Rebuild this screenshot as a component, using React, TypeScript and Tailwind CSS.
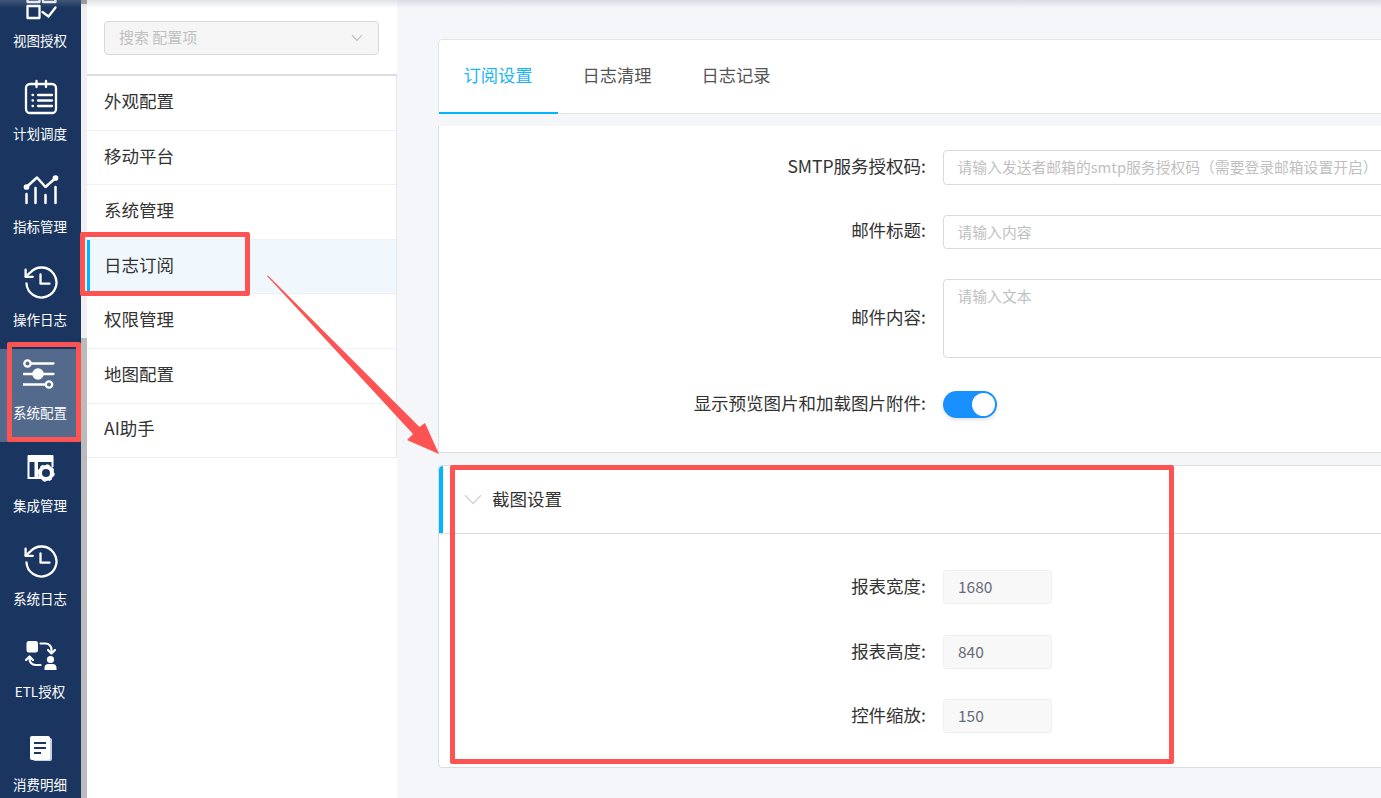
const cjk = "font-['Noto_Sans_CJK_SC','Noto_Sans',sans-serif]";

function ClockIcon() {
  return (
    <svg width="36" height="36" viewBox="0 0 36 36" fill="none" stroke="white" strokeWidth="2.3" strokeLinecap="round" strokeLinejoin="round">
      <path d="M3.5 18.5a15 15 0 1 0 3.6-10.8L2.8 11.6" />
      <path d="M2.6 4.6v7.2h7.2" />
      <path d="M17.5 9.5v9.2h9" />
    </svg>
  );
}

const icons: React.ReactNode[] = [
  <svg key="view" width="36" height="36" viewBox="0 0 36 36" fill="none" stroke="white" strokeWidth="2.3" strokeLinecap="round" strokeLinejoin="round">
    <rect x="4.5" y="20" width="12" height="12" />
    <rect x="4.5" y="4" width="12" height="12" />
    <rect x="20" y="4" width="12.5" height="12" />
    <path d="M19.5 26l6 4.5 7-9" />
  </svg>,
  <svg key="plan" width="36" height="36" viewBox="0 0 36 36" fill="none" stroke="white" strokeWidth="2.3" strokeLinecap="round">
    <rect x="3" y="5" width="30" height="29" rx="4" />
    <path d="M13.5 2v6M23 2v6" />
    <path d="M15 16h14M15 21.5h14M15 27h14" />
    <path d="M9.5 16h.5M9.5 21.5h.5M9.5 27h.5" />
  </svg>,
  <svg key="chart" width="36" height="36" viewBox="0 0 36 36" fill="none" stroke="white" strokeWidth="2.5" strokeLinecap="round" strokeLinejoin="round">
    <path d="M3.5 15L14 5.5 22.5 15l10-9" />
    <circle cx="3.5" cy="15" r="1.6" fill="white" />
    <circle cx="32.5" cy="6" r="1.6" fill="white" />
    <path d="M3.5 22v9M12.5 16v15M22.5 23v8M32.5 15v16" />
  </svg>,
  <ClockIcon key="log" />,
  <svg key="sliders" width="36" height="36" viewBox="0 0 36 36" fill="none" stroke="white" strokeWidth="2.3" strokeLinecap="round">
    <path d="M8 5.5h22.5M0 16h30.5M0 26.5h22.5" />
    <circle cx="4.5" cy="5.5" r="3.2" />
    <circle cx="15" cy="16" r="4.6" fill="white" />
    <circle cx="26" cy="26.5" r="3.2" />
  </svg>,
  <svg key="integration" width="36" height="36" viewBox="0 0 36 36" fill="none">
    <path d="M5.5 10h24v6M5.5 10v17h12" stroke="white" strokeWidth="2" />
    <rect x="4.5" y="4" width="26" height="6" rx="1" fill="white" />
    <rect x="11.5" y="10" width="3.5" height="17" fill="white" />
    <circle cx="23" cy="22" r="6" fill="#1a3660" stroke="white" strokeWidth="4" />
    <circle cx="23" cy="22" r="7.5" fill="none" stroke="white" strokeWidth="2.4" strokeDasharray="3 2.9" />
  </svg>,
  <ClockIcon key="syslog" />,
  <svg key="etl" width="36" height="36" viewBox="0 0 36 36" fill="none" stroke="white" strokeLinecap="round" strokeLinejoin="round">
    <rect x="3.5" y="4" width="11.5" height="11.5" rx="2.5" fill="white" stroke="none" />
    <path d="M17.5 6.5h5a6 6 0 0 1 6 6v3" strokeWidth="2.2" />
    <path d="M25 13l3.5 3.5L32 13" strokeWidth="2.2" />
    <path d="M6.5 20v2a6 6 0 0 0 6 6h5" strokeWidth="2.2" />
    <path d="M3 23l3.5-3.5L10 23" strokeWidth="2.2" />
    <circle cx="27.5" cy="22.5" r="3.6" fill="white" stroke="none" />
    <path d="M21.5 33v-2a4 4 0 0 1 4-4h4a4 4 0 0 1 4 4v2z" fill="white" stroke="none" />
  </svg>,
  <svg key="doc" width="36" height="36" viewBox="0 0 36 36" fill="none">
    <rect x="10" y="8" width="19" height="23" rx="2" fill="#c9d2df" />
    <rect x="7" y="6" width="20" height="24" rx="2" fill="white" />
    <path d="M11 13h12M11 18h12M11 23h7" stroke="#1a3660" strokeWidth="1.8" />
  </svg>,
];

const navLabels = ["视图授权", "计划调度", "指标管理", "操作日志", "系统配置", "集成管理", "系统日志", "ETL授权", "消费明细"];
const configItems = ["外观配置", "移动平台", "系统管理", "日志订阅", "权限管理", "地图配置", "AI助手"];
const tabs = ["订阅设置", "日志清理", "日志记录"];

function Label({ text, className = "pb-[4px]" }: { text: string; className?: string }) {
  return <div className={"w-[487px] shrink-0 text-right text-[17.5px] leading-none text-[#333333] " + className}>{text}</div>;
}

function NumberRow({ label, value, className }: { label: string; value: string; className: string }) {
  return (
    <div className={"flex items-center gap-[17px] " + className}>
      <Label text={label} className="pb-[2px]" />
      <div className="flex h-[34px] w-[109px] items-center rounded-[3px] border border-[#f0f0f0] bg-[#f8f8f8] pl-[14px] text-[15.5px] text-[#666b7a]">{value}</div>
    </div>
  );
}

export default function App() {
  return (
    <div className={"relative flex h-[798px] w-[1381px] overflow-hidden bg-[#f5f6fa] " + cjk}>
      <nav className="h-full w-[81px] shrink-0 overflow-hidden bg-[#1a3660]">
        <div className="-mt-[23px] flex flex-col">
          {navLabels.map((label, i) => (
            <div key={label} className={"flex h-[93px] shrink-0 flex-col items-center pt-[9px] " + (i === 4 ? "bg-[#546a8c]" : "")}>
              <div className="h-[36px] w-[36px]">{icons[i]}</div>
              <div className="mt-[8px] pr-[1px] text-[13.5px] leading-[20px] whitespace-nowrap text-white">{label}</div>
            </div>
          ))}
        </div>
      </nav>

      <div className="flex w-[6px] shrink-0 flex-col bg-[#bbbbbb]">
        <div className="h-[4px] bg-[#999999]" />
        <div className="h-[334px] bg-[#f0f0f0]" />
      </div>

      <aside className="h-full w-[310px] shrink-0 bg-white">
        <div className="h-[76px] border-b-2 border-[#dddddd] px-[17px] pt-[21px]">
          <div className="flex h-[34px] w-[275px] items-center justify-between rounded-[4px] border border-[#d9d9d9] bg-[#f5f5f5] pr-[15px] pl-[14px] text-[15px] text-[#bfbfbf]">
            <span className="pb-[2px]">搜索 配置项</span>
            <svg width="12" height="8" viewBox="0 0 12 8" fill="none" stroke="#bfbfbf" strokeWidth="1.1"><path d="M1 1.2l5 5.3 5-5.3" /></svg>
          </div>
        </div>
        <ul className="border-r border-[#e8e8e8]">
          {configItems.map((item) => (
            <li
              key={item}
              className={
                "flex h-[54.6px] items-center border-b border-[#f0f0f0] pb-[3.5px] text-[17.5px] text-[#333333] " +
                (item === "日志订阅" ? "border-l-[3px] border-l-[#00b4ff] bg-[#f0f7fd] pl-[14px]" : "pl-[17px]")
              }
            >
              {item}
            </li>
          ))}
        </ul>
      </aside>

      <main className="min-w-0 flex-1 pt-[39px] pl-[41px]">
        <div className="w-[1100px]">
          <div className="flex h-[75px] rounded-t-[4px] border border-[#e4e4e4] bg-white">
            {tabs.map((tab, i) => (
              <div
                key={tab}
                className={
                  "-mb-px flex w-[119px] items-center border-b-2 pb-[2px] pl-[24.5px] text-[17.3px] " +
                  (i === 0 ? "border-[#00b4ff] text-[#1ab5f5]" : "border-transparent text-[#555555]")
                }
              >
                {tab}
              </div>
            ))}
          </div>

          <div className="mt-[12px] h-[327px] border border-t-0 border-[#dddddd] bg-white pt-[24px]">
            <div className="flex items-center gap-[17px]">
              <Label text="SMTP服务授权码:" />
              <div className="flex h-[35px] flex-1 items-center rounded-[4px] border border-[#d9d9d9] pl-[13.5px] text-[14.8px] text-[#bfbfbf]">
                <span className="whitespace-nowrap">请输入发送者邮箱的smtp服务授权码（需要登录邮箱设置开启）</span>
              </div>
            </div>
            <div className="mt-[30px] flex items-center gap-[17px]">
              <Label text="邮件标题:" />
              <div className="flex h-[34px] flex-1 items-center rounded-[4px] border border-[#d9d9d9] pl-[13.5px] text-[14.8px] text-[#bfbfbf]">
                <span>请输入内容</span>
              </div>
            </div>
            <div className="mt-[30px] flex items-center gap-[17px]">
              <Label text="邮件内容:" />
              <div className="h-[79px] flex-1 rounded-[4px] border border-[#d9d9d9] pt-[5px] pl-[13.5px] text-[14.8px] text-[#bfbfbf]">
                <span>请输入文本</span>
              </div>
            </div>
            <div className="mt-[33px] flex items-center gap-[17px]">
              <Label text="显示预览图片和加载图片附件:" />
              <div className="flex h-[27px] w-[54px] items-center justify-end rounded-full bg-[#1890ff] pr-[2px] shadow-[0_2px_4px_rgba(0,0,0,0.12)]">
                <div className="h-[23px] w-[23px] rounded-full bg-white" />
              </div>
            </div>
          </div>

          <div className="relative mt-[12px] h-[303px] rounded-[4px] border border-[#dddddd] bg-white">
            <div className="flex h-[68px] items-center border-b border-[#dddddd] pl-[25px]">
              <svg width="18" height="11" viewBox="0 0 18 11" fill="none" stroke="#d4d4d4" strokeWidth="1.4"><path d="M1 1.2l8 8.3 8-8.3" /></svg>
              <span className="ml-[10px] text-[17.5px] text-[#333333]">截图设置</span>
            </div>
            <NumberRow label="报表宽度:" value="1680" className="mt-[36px]" />
            <NumberRow label="报表高度:" value="840" className="mt-[31px]" />
            <NumberRow label="控件缩放:" value="150" className="mt-[30px]" />
            <div className="absolute top-0 left-0 h-[67px] w-[4px] rounded-tl-[4px] bg-[#00b4ff]" />
          </div>
        </div>
      </main>

      {/* top shadow of the page header */}
      <div className="pointer-events-none absolute top-0 left-0 h-[8px] w-full bg-gradient-to-b from-gray-400/30 to-transparent" />

      {/* red annotations */}
      <div className="pointer-events-none absolute top-[342px] left-[7px] h-[100px] w-[74px] rounded-[2px] border-[5px] border-[#fd5353]" />
      <div className="pointer-events-none absolute top-[232px] left-[80px] h-[64px] w-[170px] rounded-[2px] border-[5px] border-[#fd5353]" />
      <div className="pointer-events-none absolute top-[465px] left-[450px] h-[299px] w-[724px] rounded-[2px] border-[5px] border-[#fd5353]" />
      <svg className="pointer-events-none absolute top-0 left-0" width="1381" height="798" viewBox="0 0 1381 798">
        <polygon points="267,276 268,275.5 419.5,427 425,423 439,454 407,440 413,434" fill="#fd5353" />
      </svg>
    </div>
  );
}
